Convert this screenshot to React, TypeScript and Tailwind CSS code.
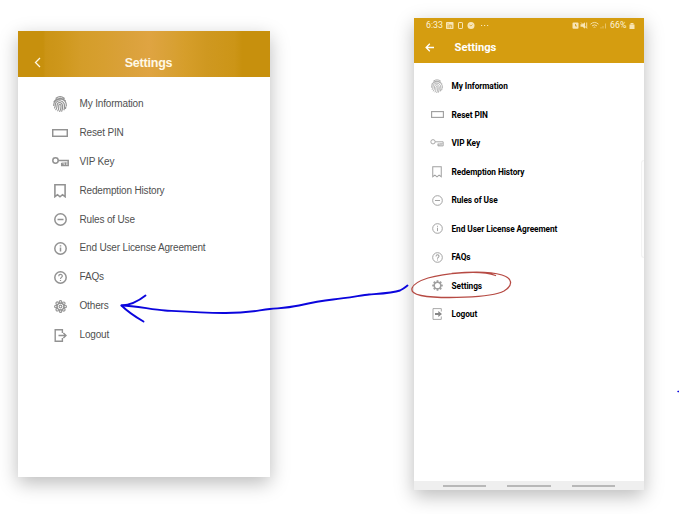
import React from "react";

type IconName = "finger" | "pin" | "key" | "receipt" | "minus" | "info" | "help" | "flower" | "gear" | "exit" | "exitSolid";

function Glyph({ name, thin }: { name: IconName; thin?: boolean }) {
  const w = thin ? 1.15 : 1.5;
  const common = { fill: "none", stroke: "currentColor", strokeWidth: w } as const;
  switch (name) {
    case "finger":
      return (
        <svg width={thin ? 12 : 14} height={thin ? 14 : 16} viewBox="0 0 14 16" preserveAspectRatio="none" {...common} strokeWidth={thin ? 0.95 : 1.15} strokeLinecap="round">
          <path d="M3 2.2C5.500.4 8.800.4 11.200 2.300M1 5.700C3 2 9.500 1 12.400 4.900M.7 9.500C.4 4.500 5 2.500 8.600 3.300C12 4.200 13.500 6.500 13.300 10M1.500 12C2.800 10 1.800 8.500 3 6.500C5 3.700 9.500 4.500 10.900 7.300C11.800 9.500 11.600 12 11 13.800M2.900 13.700C4.800 11.500 3.300 9 4.700 7.300C6.500 5.500 9.200 7 9.600 9.500C9.800 11.500 9.400 13.500 8.700 15.200M4.800 14.800C6.500 12.200 5.300 10.500 6 8.800C6.600 7.700 7.900 8.500 8 9.800C8.200 12 7.500 14 6.700 15.500M12.800 11.200L12.500 12.500" />
        </svg>
      );
    case "pin":
      return (
        <svg width={thin ? 13 : 16} height={thin ? 7 : 8} viewBox={thin ? "0 0 13 7" : "0 0 16 8"} {...common}>
          {thin ? <rect x=".6" y=".6" width="11.800" height="5.800" /> : <rect x=".7" y=".7" width="14.600" height="6.600" />}
        </svg>
      );
    case "key":
      return (
        <svg width={thin ? 14 : 17} height={thin ? 8 : 10} viewBox="0 0 17 10" {...common}>
          <circle cx="3.500" cy="3.500" r="2.700" />
          <path d="M6.200 3.500H16.200V8.600H9.700V6M11 8.600V6.500M13.500 8V5.500" />
          <path d="M9.500 6H16" strokeWidth=".8" />
        </svg>
      );
    case "receipt":
      return (
        <svg width={thin ? 10 : 12} height={thin ? 12 : 14} viewBox="0 0 12 14" {...common} strokeWidth={w * 1.05}>
          <path d="M.9.800H11.100V12.700L8.500 10.700L6 12.800L3.500 10.700L.9 12.700Z" />
        </svg>
      );
    case "minus":
    case "info":
    case "help":
      return (
        <svg width={thin ? 11 : 13} height={thin ? 11 : 13} viewBox="0 0 13 13" {...common}>
          <circle cx="6.500" cy="6.500" r="5.700" />
          {name === "minus" && <path d="M3.500 6.500H9.500" />}
          {name === "info" && <path d="M6.500 5.600V9.600M6.500 3.300V4.500" />}
          {name === "help" && <path d="M4.700 5.200C4.800 2.700 8.400 2.900 8.300 5.100C8.200 6.400 6.500 6.400 6.500 7.900M6.500 8.900V10.100" strokeWidth="1.200" />}
        </svg>
      );
    case "flower":
      return (
        <svg width="13" height="13" viewBox="0 0 13 13" fill="none" stroke="currentColor" strokeWidth="1.100">
          {[0, 45, 90, 135, 180, 225, 270, 315].map((a) => (
            <circle key={a} cx="6.500" cy="1.900" r="1.300" transform={`rotate(${a} 6.5 6.5)`} />
          ))}
          <circle cx="6.500" cy="6.500" r="3.400" />
          <circle cx="6.500" cy="6.500" r="1.400" />
        </svg>
      );
    case "gear":
      return (
        <svg width="11" height="11" viewBox="0 0 11 11" fill="none" stroke="currentColor" strokeWidth="1.500">
          <circle cx="5.500" cy="5.500" r="3.300" />
          {[0, 45, 90, 135, 180, 225, 270, 315].map((a) => (
            <path key={a} d="M5.500.2V2.200" strokeWidth="1.800" transform={`rotate(${a} 5.5 5.5)`} />
          ))}
        </svg>
      );
    case "exit":
      return (
        <svg width="13" height="13" viewBox="0 0 13 13" {...common} strokeWidth="1.400">
          <path d="M8.400 4V.7H1.200V12.300H8.400V9M4.500 6.500H11.700M9.400 3.900L12 6.500L9.400 9.100" />
        </svg>
      );
    case "exitSolid":
      return (
        <svg width="11" height="12" viewBox="0 0 11 12" fill="none" stroke="currentColor" strokeWidth=".9">
          <path d="M9.300 3.500V.6H1V11.400H9.300V8.500" />
          <path d="M3 4.900H6.300V3L10 6L6.300 9V7.100H3Z" fill="#888" stroke="none" />
        </svg>
      );
  }
}

const labels: [string, IconName][] = [
  ["My Information", "finger"],
  ["Reset PIN", "pin"],
  ["VIP Key", "key"],
  ["Redemption History", "receipt"],
  ["Rules of Use", "minus"],
  ["End User License Agreement", "info"],
  ["FAQs", "help"],
];
const oldRows: [string, IconName][] = [...labels, ["Others", "flower"], ["Logout", "exit"]];
const newRows: [string, IconName][] = [...labels, ["Settings", "gear"], ["Logout", "exitSolid"]];

function StatusIcons() {
  return (
    <svg width="43" height="9" viewBox="0 0 43 9" fill="none" stroke="#f8e5b5" strokeWidth="1">
      <rect y="1" width="7.500" height="7" rx=".8" fill="#f8e5b5" stroke="none" />
      <path d="M2 3.500V7M2 2V2.700M3.800 7V3.500M3.800 4.200H5.700V7" stroke="#d59d10" strokeWidth=".8" />
      <rect x="12.500" y="1.500" width="4" height="6" rx=".6" />
      <circle cx="25" cy="4.500" r="3.500" fill="#f8e5b5" stroke="none" />
      <path d="M23.500 4L25 5L26.500 3.500" stroke="#d59d10" strokeWidth=".7" />
      <path d="M35 4.500H36.200M38 4.500H39.200M41 4.500H42.200" />
    </svg>
  );
}

function SignalIcons() {
  return (
    <svg width="36" height="9" viewBox="0 0 36 9" fill="none" stroke="#f8e5b5" strokeWidth=".9">
      <rect x=".5" y="1.500" width="6" height="6.200" rx="1" fill="#f8e5b5" stroke="none" />
      <path d="M3.500 3V5H5" stroke="#d59d10" />
      <path d="M8.500 3.200H10.500L13 1.200V7.800L10.500 5.800H8.500Z" fill="#f8e5b5" stroke="none" />
      <path d="M9 1.500L15 7.500M14.700 1.500V7" />
      <path d="M18.500 3.200Q22.500-.3 26.500 3.200M20 4.900Q22.500 2.800 25 4.900M21.600 6.400Q22.500 5.700 23.400 6.400" />
      <path d="M29 7.500V6.200M31 7.500V5M33.500 7.500V2.500" opacity=".6" />
    </svg>
  );
}

export default function App() {
  return (
    <main className="relative flex h-[514px] w-[679px] overflow-hidden bg-white">
      <section className="mt-[31px] ml-[18px] h-[446px] w-[252px] shrink-0 bg-white font-['Liberation_Sans',sans-serif] shadow-[0_6px_18px_rgba(0,0,0,0.27)]">
        <header className="grid h-[46px] grid-cols-[40px_1fr_40px] items-center bg-[linear-gradient(90deg,#c7900d_0%,#c7900d_10%,#cb9416_11%,#ce971b_17%,#d49d29_25%,#d79f30_34%,#daa13a_43%,#dfa442_52%,#d9a136_60%,#d69e2b_66%,#cf9820_75%,#cc9517_86%,#c7900d_89%,#c7900d_100%)] pt-[17px] text-[#fff8e5]">
          <svg className="ml-[16px]" width="7" height="11" viewBox="0 0 7 11" fill="none" stroke="currentColor" strokeWidth="1.300"><path d="M6 1L1.500 5.500L6 10" /></svg>
          <h1 className="pl-[9px] text-center text-[12.500px] leading-[16px] font-bold tracking-[-0.200px]">Settings</h1>
        </header>
        <ul className="pt-[12.500px]">
          {oldRows.map(([label, icon]) => (
            <li key={label} className="flex h-[28.900px] items-center">
              <span className="ml-[32px] flex w-[20px] justify-center text-[#929292]"><Glyph name={icon} /></span>
              <span className="ml-[9.500px] text-[10px] leading-[14px] tracking-[-0.160px] whitespace-nowrap text-[#505050]">{label}</span>
            </li>
          ))}
        </ul>
      </section>

      <section className="mt-[18px] ml-[144px] flex h-[472px] w-[230px] shrink-0 flex-col bg-white font-[Roboto,sans-serif] shadow-[0_6px_18px_rgba(0,0,0,0.27)]">
        <header className="h-[44.500px] shrink-0 bg-[#d59d10]">
          <div className="flex h-[14px] items-center pl-[12px] text-[8.800px] leading-[12px] text-[#fdf3d8]">
            <span className="w-[20px] whitespace-nowrap">6:33</span>
            <StatusIcons />
            <span className="ml-[83px] flex"><SignalIcons /></span>
            <span className="ml-[2px] w-[19px] whitespace-nowrap">66%</span>
            <svg width="6" height="7" viewBox="0 0 6 7" fill="#f8e5b5"><rect x=".5" y="2.500" width="5" height="4.500" /><path d="M1.500 2.500V1H4.500V2.500" /></svg>
          </div>
          <div className="flex h-[31px] items-center text-white">
            <svg className="ml-[11px]" width="10" height="9" viewBox="0 0 10 9" fill="none" stroke="currentColor" strokeWidth="1.300"><path d="M9 4.500H1.200M4.800.8L1.100 4.500L4.800 8.200" /></svg>
            <h1 className="ml-[19.500px] text-[11.200px] leading-[14px] font-bold">Settings</h1>
          </div>
        </header>
        <div className="flex flex-1 justify-between">
          <ul className="pt-[9.500px]">
            {newRows.map(([label, icon]) => (
              <li key={label} className="flex h-[28.500px] items-center">
                <span className="ml-[13px] flex w-[20px] justify-center text-[#a0a0a0]"><Glyph name={icon} thin /></span>
                <span className="ml-[4.500px] text-[8.300px] leading-[12px] font-bold tracking-[-0.070px] whitespace-nowrap text-black">{label}</span>
              </li>
            ))}
          </ul>
          <i className="mt-[97px] h-[98px] w-[3px] rounded-l border border-r-0 border-[#f3f3f3] bg-[#fdfdfd]" />
        </div>
        <footer className="flex h-[9px] shrink-0 items-center justify-center gap-[21px] bg-[#efefef]">
          <i className="h-[2px] w-[43.500px] bg-[#b8b8b8]" />
          <i className="h-[2px] w-[43.500px] bg-[#b8b8b8]" />
          <i className="h-[2px] w-[43.500px] bg-[#b8b8b8]" />
        </footer>
      </section>

      <svg className="pointer-events-none absolute inset-0" width="679" height="514" viewBox="0 0 679 514" fill="none" strokeLinecap="round" strokeLinejoin="round">
        <g stroke="#0b05dd" strokeWidth="1.900">
          <path d="M121.500 305.500C135 305.500 151 309.500 165 310.500C182 311.500 201 312.800 223 313C246 313.300 254 311 270 309C280 308 287 308 299 305.500C310 303 324 300.500 333 299.500C348 298 363 295 369 294.500C382 293.500 393 293 400 290.500C404 288.500 405 287.500 407.500 285.500" />
          <path d="M145.500 295.500C138 301.500 131 305 121.500 305.500C127 311 134 316 143.500 321.500" />
        </g>
        <path d="M495.500 275.500C480 269.500 443 273.500 428 278C409 284 407 293 421 295.500C440 299 491 298 504 291C514 285 512 278 502 275C487 270.500 467 272 452 273.500" stroke="#b64a43" strokeWidth="1.300" />
        <path d="M678 391.500H679" stroke="#0b05dd" strokeWidth="1.500" />
      </svg>
    </main>
  );
}
